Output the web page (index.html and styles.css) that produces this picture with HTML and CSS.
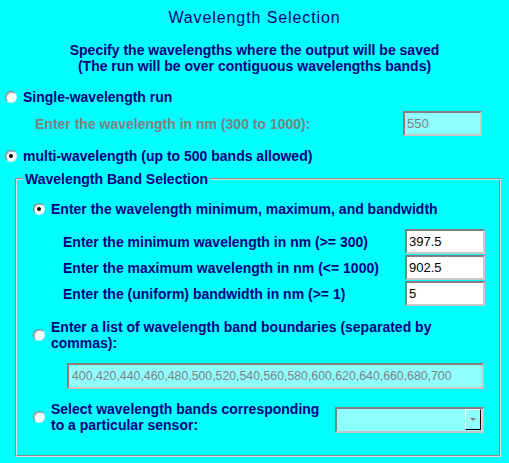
FILE: index.html
```html
<!DOCTYPE html>
<html>
<head>
<meta charset="utf-8">
<title>Wavelength Selection</title>
<link rel="stylesheet" href="styles.css">
</head>
<body>
<div class="page">
  <h1 class="title">Wavelength Selection</h1>
  <p class="intro">Specify the wavelengths where the output will be saved<br>(The run will be over contiguous wavelengths bands)</p>

  <div class="opt opt-single"><span class="radio"></span><span>Single-wavelength run</span></div>
  <div class="single-row">
    <span class="dim-label">Enter the wavelength in nm (300 to 1000):</span>
    <span class="field field-dim field-small">550</span>
  </div>

  <div class="opt opt-multi"><span class="radio checked"></span><span>multi-wavelength (up to 500 bands allowed)</span></div>

  <fieldset class="group">
    <legend class="legend">Wavelength Band Selection</legend>
    <div class="group-body">
      <div class="opt opt-range"><span class="radio checked"></span><span>Enter the wavelength minimum, maximum, and bandwidth</span></div>
      <div class="rows">
        <span class="row-label">Enter the minimum wavelength in nm (&gt;= 300)</span>
        <span class="field">397.5</span>
        <span class="row-label">Enter the maximum wavelength in nm (&lt;= 1000)</span>
        <span class="field">902.5</span>
        <span class="row-label">Enter the (uniform) bandwidth in nm (&gt;= 1)</span>
        <span class="field">5</span>
      </div>

      <div class="opt opt-list"><span class="radio"></span><span>Enter a list of wavelength band boundaries (separated by<br>commas):</span></div>
      <div class="field field-dim field-list">400,420,440,460,480,500,520,540,560,580,600,620,640,660,680,700</div>

      <div class="sensor-row">
        <div class="opt"><span class="radio"></span><span>Select wavelength bands corresponding<br>to a particular sensor:</span></div>
        <div class="combo">
          <span class="combo-btn"><span class="arrow"></span></span>
        </div>
      </div>
    </div>
  </fieldset>
</div>
</body>
</html>
```

FILE: styles.css
```css
body {
  margin: 0;
  background: #00ffff;
  color: #000080;
  font-family: "Liberation Sans", Arial, sans-serif;
}

.page {
  padding-top: 8px;
}

.title {
  margin: 0;
  font-size: 16px;
  font-weight: normal;
  letter-spacing: 0.9px;
  line-height: 20px;
  text-align: center;
}

.intro {
  margin: 14px 0 0;
  font-size: 14px;
  font-weight: bold;
  line-height: 16px;
  text-align: center;
}

.opt {
  display: flex;
  align-items: center;
  font-size: 14px;
  font-weight: bold;
  line-height: 16px;
}

.radio {
  flex: none;
  position: relative;
  width: 12px;
  height: 12px;
  box-sizing: border-box;
  margin-right: 6px;
  border-radius: 50%;
  background: #ffffff;
  border: 1px solid;
  border-color: #808080 #e8e8e8 #e8e8e8 #808080;
  box-shadow: inset 1px 1px 0 #c0c0c0;
}

.radio.checked::after {
  content: "";
  position: absolute;
  left: 3px;
  top: 3px;
  width: 4px;
  height: 4px;
  border-radius: 50%;
  background: #000000;
}

.opt-single {
  margin-top: 15px;
  padding-left: 5px;
}

.single-row {
  display: flex;
  align-items: center;
  justify-content: space-between;
  margin-top: 6px;
  padding: 0 27px 0 35px;
}

.dim-label {
  color: #808080;
  font-size: 14px;
  font-weight: bold;
  line-height: 16px;
}

.field {
  display: block;
  box-sizing: border-box;
  height: 25px;
  padding-left: 2px;
  border: 2px solid;
  border-color: #808080 #c8c8c8 #c8c8c8 #808080;
  background: #ffffff;
  color: #000000;
  font-size: 13px;
  font-weight: normal;
  line-height: 21px;
  white-space: nowrap;
  overflow: hidden;
}

.field-dim {
  background: #8fffff;
  color: #808080;
}

.field-small {
  width: 79px;
}

.opt-multi {
  margin-top: 12px;
  padding-left: 5px;
}

.group {
  margin: 7px 8px 0 15px;
  padding: 0 14px 22px 6px;
  border: 2px groove #d8e0e0;
  min-width: 0;
}

.legend {
  padding: 0 2px;
  font-size: 14px;
  font-weight: bold;
  line-height: 16px;
}

.group-body {
  padding-left: 10px;
}

.opt-range {
  margin-top: 14px;
}

.rows {
  display: grid;
  grid-template-columns: 1fr 80px;
  row-gap: 1px;
  align-items: center;
  margin-top: 12px;
  padding-left: 30px;
}

.row-label {
  font-size: 14px;
  font-weight: bold;
  line-height: 16px;
}

.opt-list {
  margin-top: 13px;
}

.field-list {
  height: 26px;
  margin: 12px 1px 0 34px;
  padding-left: 3px;
  font-size: 12.3px;
  line-height: 22px;
}

.sensor-row {
  display: flex;
  justify-content: space-between;
  align-items: flex-end;
  margin-top: 12px;
}

.combo {
  display: flex;
  justify-content: flex-end;
  box-sizing: border-box;
  width: 149px;
  height: 26px;
  margin-right: 1px;
  padding: 0 1px 1px 0;
  border: 2px solid;
  border-color: #808080 #c8c8c8 #c8c8c8 #808080;
  background: #8fffff;
}

.combo-btn {
  display: flex;
  align-items: center;
  justify-content: center;
  box-sizing: border-box;
  width: 16px;
  height: 100%;
  background: #8fffff;
  border: 1px solid;
  border-color: #ffffff #000000 #000000 #ffffff;
}

.arrow {
  width: 0;
  height: 0;
  border-left: 3px solid transparent;
  border-right: 3px solid transparent;
  border-top: 3px solid #808080;
}
```
